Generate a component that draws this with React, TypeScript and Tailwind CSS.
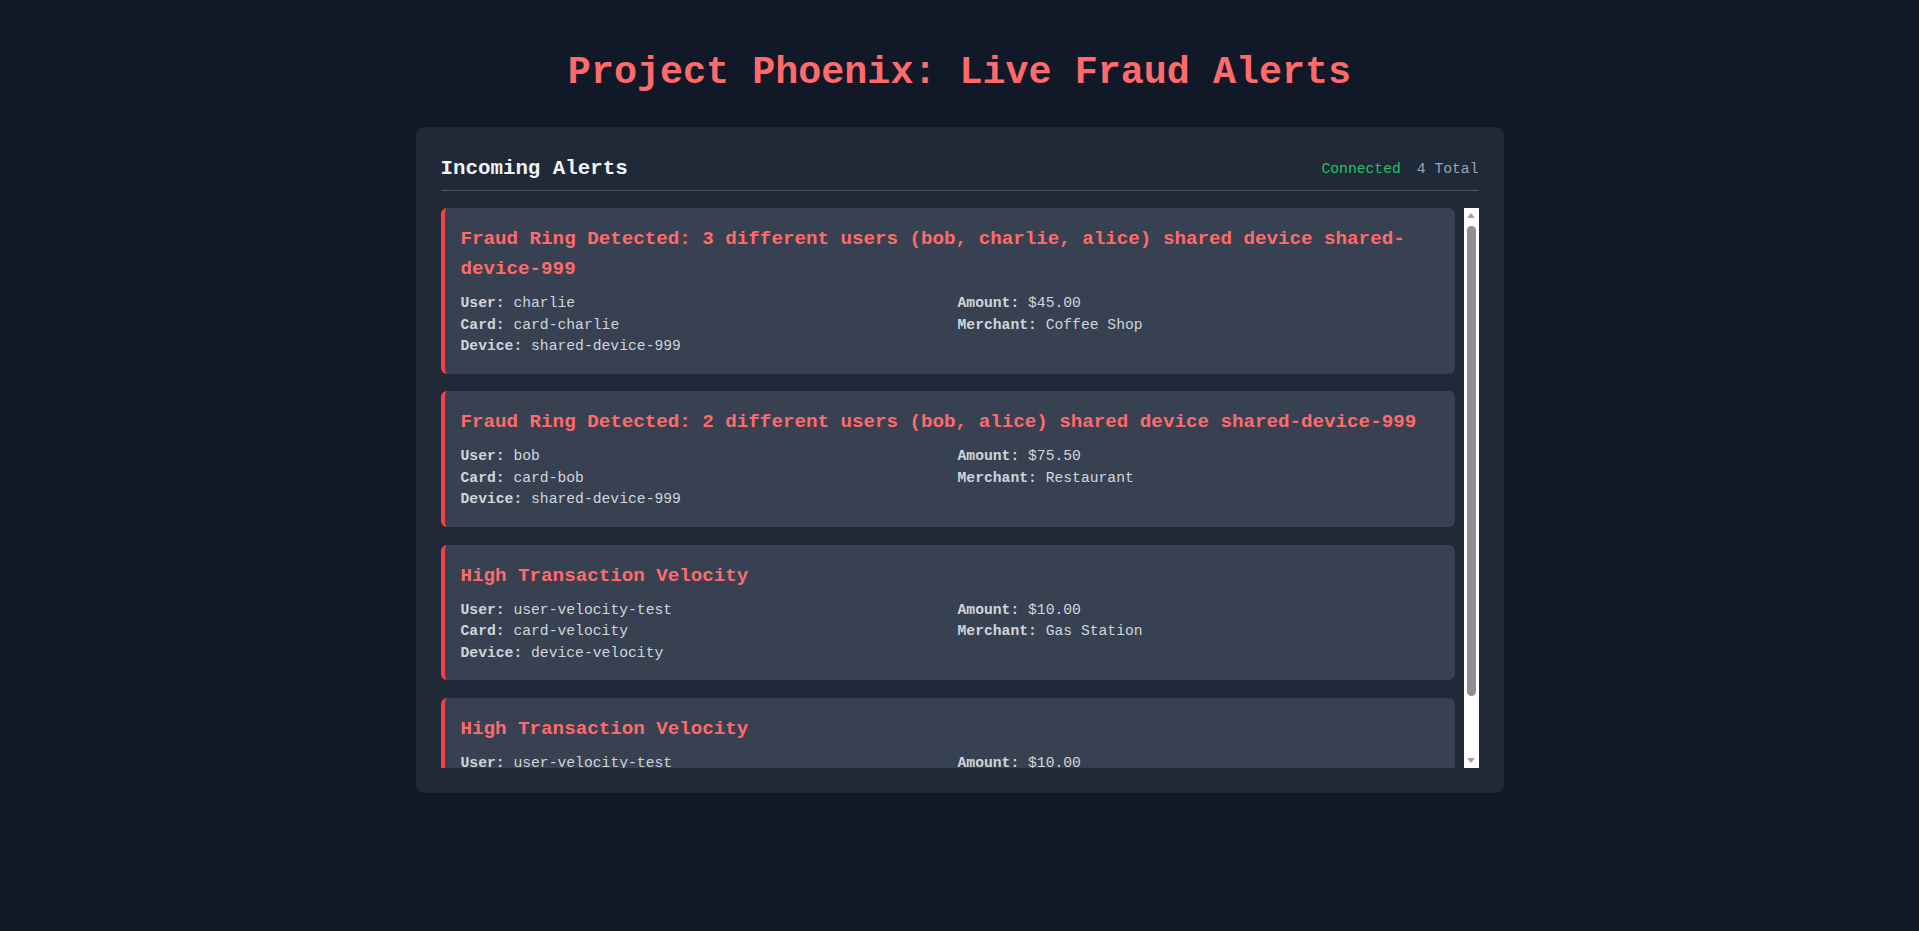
import * as React from "react";

interface Alert {
  id: string;
  title: string;
  user: string;
  card: string;
  device: string;
  amount: string;
  merchant: string;
}

const alerts: Alert[] = [
  {
    id: "a4",
    title:
      "Fraud Ring Detected: 3 different users (bob, charlie, alice) shared device shared-device-999",
    user: "charlie",
    card: "card-charlie",
    device: "shared-device-999",
    amount: "$45.00",
    merchant: "Coffee Shop",
  },
  {
    id: "a3",
    title: "Fraud Ring Detected: 2 different users (bob, alice) shared device shared-device-999",
    user: "bob",
    card: "card-bob",
    device: "shared-device-999",
    amount: "$75.50",
    merchant: "Restaurant",
  },
  {
    id: "a2",
    title: "High Transaction Velocity",
    user: "user-velocity-test",
    card: "card-velocity",
    device: "device-velocity",
    amount: "$10.00",
    merchant: "Gas Station",
  },
  {
    id: "a1",
    title: "High Transaction Velocity",
    user: "user-velocity-test",
    card: "card-velocity",
    device: "device-velocity",
    amount: "$10.00",
    merchant: "Gas Station",
  },
];

function Field({ label, value }: { label: string; value: string }) {
  return (
    <div>
      <span className="font-bold">{label}:</span> {value}
    </div>
  );
}

function AlertCard({ alert }: { alert: Alert }) {
  return (
    <div className="bg-[#374151] border-l-4 border-[#ef4444] rounded-md p-4 mb-[17.7px]">
      <h3 className="text-[19.2px] leading-[30px] font-bold text-[#ff6b6b] mb-[9px]">
        {alert.title}
      </h3>
      {/* two columns: who on the left, money on the right */}
      <div className="grid grid-cols-2 gap-x-4 text-[14.7px] leading-[21.5px] text-[#d1d5db]">
        <Field label="User" value={alert.user} />
        <Field label="Amount" value={alert.amount} />
        <Field label="Card" value={alert.card} />
        <Field label="Merchant" value={alert.merchant} />
        <Field label="Device" value={alert.device} />
      </div>
    </div>
  );
}

// Classic light scrollbar, drawn so it shows the same in headless mode
function ScrollTrack() {
  return (
    <div className="w-[15px] bg-white flex flex-col items-center shrink-0">
      <div className="h-[15px] flex items-center justify-center">
        <svg width="8" height="5" viewBox="0 0 8 5">
          <path d="M4 0 L8 5 L0 5 Z" fill="#a3a3a3" />
        </svg>
      </div>
      <div className="flex-1 w-full flex flex-col items-center pt-[3px]">
        <div className="w-[9px] h-[470px] rounded-full bg-[#8f8f8f]" />
      </div>
      <div className="h-[15px] flex items-center justify-center">
        <svg width="8" height="5" viewBox="0 0 8 5">
          <path d="M0 0 L8 0 L4 5 Z" fill="#a3a3a3" />
        </svg>
      </div>
    </div>
  );
}

export default function App() {
  return (
    <div
      className="min-h-screen bg-[#111827] pt-[50px]"
      style={{ fontFamily: '"Liberation Mono", "DejaVu Sans Mono", monospace' }}
    >
      <h1 className="text-center text-[38.4px] leading-[46px] font-bold text-[#ff6b6b] mb-[31px]">
        Project Phoenix: Live Fraud Alerts
      </h1>

      <div className="w-[1088px] mx-auto bg-[#1f2937] rounded-lg px-[25px] pt-[26px] pb-[25px]">
        {/* header */}
        <div className="flex items-center justify-between border-b border-[#4b5563] pb-[6px] mb-[17px]">
          <h2 className="text-[20.8px] leading-[31.2px] font-bold text-[#f3f4f6]">Incoming Alerts</h2>
          <div className="flex items-center gap-4 text-[14.7px]">
            <span className="text-[#22c55e]">Connected</span>
            <span className="text-[#9ca3af]">{alerts.length} Total</span>
          </div>
        </div>

        {/* alert list */}
        <div className="h-[560px] flex">
          <div className="flex-1 overflow-hidden pr-[9px]">
            {alerts.map((a) => (
              <AlertCard key={a.id} alert={a} />
            ))}
          </div>
          <ScrollTrack />
        </div>
      </div>
    </div>
  );
}
